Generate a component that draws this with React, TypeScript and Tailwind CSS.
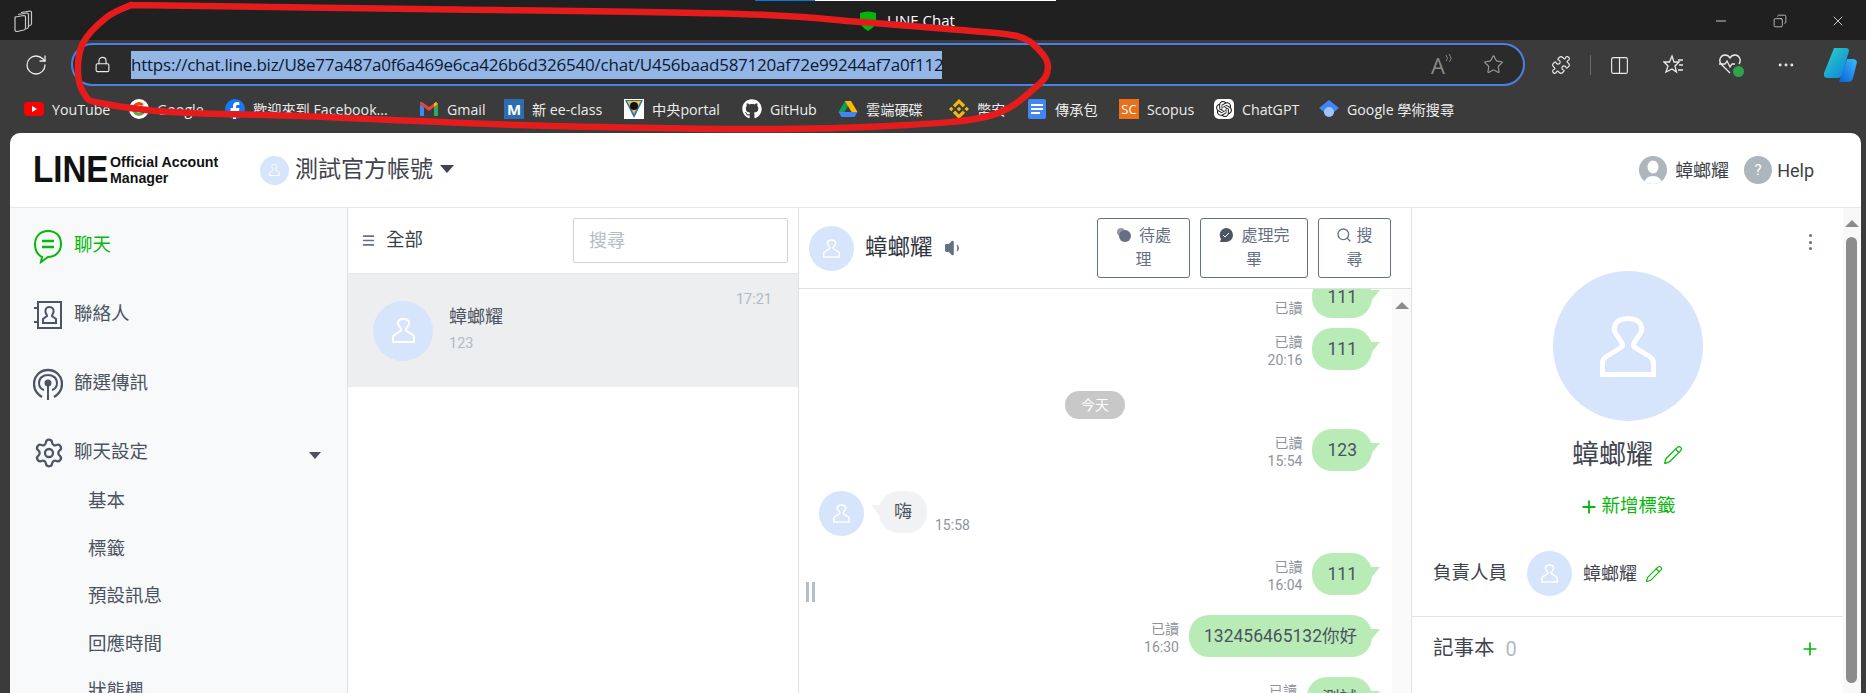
import React from 'react';
import { RotateCw, Lock, Star, Puzzle, Columns2, MoreHorizontal, Minus, X, Copy, Search, Volume1, Pencil, Plus, Settings, Menu } from 'lucide-react';
import { FaGithub } from 'react-icons/fa';
import { SiOpenai, SiBinance } from 'react-icons/si';
import { FcGoogle } from 'react-icons/fc';

const chromeFont = "font-['Open_Sans','Noto_Sans_CJK_TC',sans-serif]";
const appFont = "font-['Roboto','Noto_Sans_CJK_TC',sans-serif]";

const PersonGlyph = ({ className }: { className: string }) => (
  <svg viewBox="0 0 56 61" className={className} fill="none" stroke="white" strokeWidth="5">
    <path d="M2.500 58.500V47q0-4 4-6.500L21 31.500q2.500-1.500 1-4.500L15.500 17q-2-3-1-6C15.500 5.500 21 2.500 28 2.500S40.500 5.500 41.500 11q1 3-1 6L34 27q-1.500 3 1 4.500l14.500 9q4 2.500 4 6.500v11.500z" />
  </svg>
);

const Avatar = ({ box, glyph }: { box: string; glyph: string }) => (
  <div className={`${box} shrink-0 rounded-full bg-[#d6e4fc] flex items-center justify-center`}>
    <PersonGlyph className={glyph} />
  </div>
);

const bookmarks: { label: string; icon: React.ReactNode; w: string }[] = [
  { label: 'YouTube', w: 'w-[105px]', icon: <svg viewBox="0 0 20 20" className="w-5 h-5"><rect y="3" width="20" height="14" rx="4" fill="#f00" /><path d="M8 7l5 3-5 3z" fill="#fff" /></svg> },
  { label: 'Google', w: 'w-[96px]', icon: <span className="w-5 h-5 rounded-full bg-white flex items-center justify-center"><FcGoogle className="w-4 h-4" /></span> },
  { label: '歡迎來到 Facebook...', w: 'w-[194px]', icon: <svg viewBox="0 0 20 20" className="w-5 h-5"><circle cx="10" cy="10" r="10" fill="#1877f2" /><path d="M11 20v-8h3l.4-3H11V7.500c0-1 .4-1.500 1.600-1.500h1.700V3.300C13.800 3.200 13 3 12 3c-2.400 0-4 1.500-4 4v2H5.500v3H8v8z" fill="#fff" /></svg> },
  { label: 'Gmail', w: 'w-[85px]', icon: <svg viewBox="0 0 20 20" className="w-5 h-5"><path d="M1 5v12h4V8z" fill="#4285f4" /><path d="M19 5v12h-4V8z" fill="#34a853" /><path d="M1 5l9 7 9-7-2-2-7 5-7-5-2 0z" fill="#ea4335" /><path d="M15 8l4-3-2-2-2 1.500z" fill="#fbbc04" /></svg> },
  { label: '新 ee-class', w: 'w-[120px]', icon: <span className="w-5 h-5 bg-[#2c6cb0] text-white text-[15px] font-bold leading-5 text-center">M</span> },
  { label: '中央portal', w: 'w-[118px]', icon: <svg viewBox="0 0 20 20" className="w-5 h-5"><rect width="20" height="20" fill="#fff" /><path d="M1 1h18L10 19z" fill="#2f6fb3" /><path d="M3 2h14l-7 13z" fill="#f2c230" /><circle cx="10" cy="7" r="4" fill="#111" /></svg> },
  { label: 'GitHub', w: 'w-[96px]', icon: <FaGithub className="w-5 h-5 text-white" /> },
  { label: '雲端硬碟', w: 'w-[111px]', icon: <svg viewBox="0 0 20 18" className="w-5 h-[18px]"><path d="M7 1h6L6.500 12H.500z" fill="#0f9d58" /><path d="M13 1l6.500 11h-6L7 1z" fill="#fbbc04" /><path d="M6.500 12h13L16.500 17h-13L.500 12z" fill="#4285f4" /></svg> },
  { label: '幣安', w: 'w-[78px]', icon: <SiBinance className="w-5 h-5 text-[#f0b90b]" /> },
  { label: '傳承包', w: 'w-[92px]', icon: <svg viewBox="0 0 20 20" className="w-5 h-5"><rect x="1" width="18" height="20" rx="2" fill="#4285f4" /><path d="M4 5h12v2H4zM4 9h12v2H4zM4 13h9v2H4z" fill="#fff" /></svg> },
  { label: 'Scopus', w: 'w-[95px]', icon: <span className="w-5 h-5 bg-[#e9711c] text-white text-[13px] leading-5 text-center">SC</span> },
  { label: 'ChatGPT', w: 'w-[105px]', icon: <span className="w-5 h-5 rounded-[5px] bg-white flex items-center justify-center"><SiOpenai className="w-4 h-4 text-[#222]" /></span> },
  { label: 'Google 學術搜尋', w: 'w-[140px]', icon: <svg viewBox="0 0 20 20" className="w-5 h-5"><path d="M10 1l10 8-10 8L0 9z" fill="#4285f4" /><circle cx="10" cy="13" r="5" fill="#a0c3ff" /></svg> },
];

const redPoints: [number, number][] = [
  [131, 5], [417, 9], [740, 14], [860, 22], [960, 30], [1017, 36], [1039, 50], [1048, 67], [1037, 86], [989, 116],
  [887, 126], [753, 129], [520, 125], [300, 116], [170, 112], [100, 103], [85, 95], [78, 73], [83, 43], [107, 17], [131, 5],
];

// catmull-rom through the points of the hand drawn circle
const smooth = (pts: [number, number][]) => {
  let d = `M${pts[0][0]} ${pts[0][1]}`;
  for (let i = 0; i < pts.length - 1; i++) {
    const p0 = pts[Math.max(i - 1, 0)];
    const p1 = pts[i];
    const p2 = pts[i + 1];
    const p3 = pts[Math.min(i + 2, pts.length - 1)];
    d += `C${p1[0] + (p2[0] - p0[0]) / 6} ${p1[1] + (p2[1] - p0[1]) / 6} ${p2[0] - (p3[0] - p1[0]) / 6} ${p2[1] - (p3[1] - p1[1]) / 6} ${p2[0]} ${p2[1]}`;
  }
  return d;
};

const TitleBar = () => (
  <div className="h-10 shrink-0 bg-[#202020] flex flex-col">
    <div className="h-px ml-[755px] w-[301px] flex">
      <div className="w-[60px] bg-[#0a78d4]" />
      <div className="flex-1 bg-white" />
    </div>
    <div className="flex-1 flex items-center text-[#f0f0f0]">
      <svg viewBox="0 0 20 22" className="ml-[13px] w-[20px] h-[22px]" fill="none" stroke="#c8c8c8" strokeWidth="1.200" strokeLinejoin="round">
        <path d="M8 2.500l9-1.500q1.500 0 1.500 1.500v11q0 1.500-1.500 2l-1 .3" />
        <path d="M5 4.500l9-1.500q1.500 0 1.500 1.500v12q0 1.500-1.500 2l-1 .3" />
        <path d="M2 7l9-1.500q1.500 0 1.500 1.500v11q0 1.500-1.500 2l-7 1.500Q2 21.500 2 20z" />
      </svg>
      <svg viewBox="0 0 18 20" className="ml-[826px] w-[18px] h-5">
        <path d="M1 2q8-3 16 0v9q-1 5-8 9-7-4-8-9z" fill="#06b30a" />
      </svg>
      <span className="ml-[10px] text-[15px] text-white">LINE Chat</span>
      <div className="ml-auto flex items-center">
        <Minus className="w-4 h-4" strokeWidth={1.200} />
        <Copy className="ml-[44px] w-[14px] h-[14px] -scale-x-100" strokeWidth={1.200} />
        <X className="ml-[43px] mr-[20px] w-4 h-4" strokeWidth={1.200} />
      </div>
    </div>
  </div>
);

const AddressRow = () => (
  <div className="h-[50px] shrink-0 flex items-center text-[#ececec]">
    <RotateCw className="ml-[24px] w-[24px] h-[24px]" strokeWidth={1.300} />
    <div className="ml-[23px] w-[1454px] h-[43px] rounded-full border-[2.500px] border-[#4a80e6] bg-[#2b2b2b] flex items-center -mt-[1px]">
      <Lock className="ml-[21px] w-[17px] h-[19px]" strokeWidth={1.600} />
      <span className="ml-[20px] h-[28px] w-[811px] bg-[#93b6e6] text-[#0b1a2e] text-[17px] leading-[28px] whitespace-nowrap tracking-[-0.23px]">
        https://chat.line.biz/U8e77a487a0f6a469e6ca426b6d326540/chat/U456baad587120af72e99244af7a0f112
      </span>
      <span className="ml-auto text-[#8a8a8a] text-[22px] leading-none">A</span>
      <svg viewBox="0 0 8 12" className="w-2 h-3 -mt-3 text-[#8a8a8a]" fill="none" stroke="currentColor"><path d="M1 2q3 4 0 6M4 1q4 5 0 8" /></svg>
      <Star className="ml-[30px] mr-[19px] w-[21px] h-[21px] text-[#9a9a9a]" strokeWidth={1.300} />
    </div>
    <Puzzle className="ml-[26px] w-[20px] h-[20px]" strokeWidth={1.400} />
    <div className="ml-[19px] w-px h-[20px] bg-[#6a6a6a]" />
    <Columns2 className="ml-[18px] w-[21px] h-[21px]" strokeWidth={1.300} />
    <svg viewBox="0 0 22 22" className="ml-[33px] w-[22px] h-[22px]" fill="none" stroke="currentColor" strokeWidth="1.300">
      <path d="M9 2l2 6h5l-4 4 1.500 6L9 15l-6 3 2-6-4-4h5.500zM15 6h5M16 11h4M15 16h5" />
    </svg>
    <div className="ml-[33px] relative w-[26px] h-[24px]">
      <svg viewBox="0 0 24 22" className="w-[24px] h-[22px]" fill="none" stroke="currentColor" strokeWidth="1.300">
        <path d="M12 20L3 11C0 7 3 2 7 2c2 0 4 1 5 3 1-2 3-3 5-3 4 0 7 5 4 9M1 11h6l2-3 3 6 2-3h3" />
      </svg>
      <span className="absolute right-0 bottom-0 w-[11px] h-[11px] rounded-full bg-[#2ea44f]" />
    </div>
    <MoreHorizontal className="ml-[32px] w-[20px] h-[20px]" strokeWidth={1.500} />
    <svg viewBox="0 0 34 36" className="ml-[27px] w-[34px] h-[36px]">
      <defs>
        <linearGradient id="cpA" x1="0" y1="0" x2="1" y2="1"><stop offset="0" stopColor="#2dd4bf" /><stop offset="1" stopColor="#0b7fe0" /></linearGradient>
        <linearGradient id="cpB" x1="0" y1="1" x2="1" y2="0"><stop offset="0" stopColor="#0a5fd8" /><stop offset="1" stopColor="#38bdf8" /></linearGradient>
      </defs>
      <path d="M11 1h12q3 0 3 3L19 28q-1 3-4 3H5q-5 0-4-5z" fill="url(#cpA)" />
      <path d="M16 35h9q4 0 5-4l4-16q-1-3-4-3h-6z" fill="url(#cpB)" />
    </svg>
  </div>
);

const BookmarkRow = () => (
  <div className={`h-[43px] shrink-0 flex items-center pl-[24px] pb-[4px] text-[14.200px] text-[#ececec] ${chromeFont}`}>
    {bookmarks.map((b) => (
      <div key={b.label} className={`${b.w} shrink-0 flex items-center gap-2 whitespace-nowrap`}>
        {b.icon}
        <span>{b.label}</span>
      </div>
    ))}
  </div>
);

const ChatIcon = () => (
  <svg viewBox="0 0 30 36" className="w-[30px] h-9" fill="none" stroke="#06b80a" strokeWidth="2">
    <path d="M15 3C7 3 2 9 2 16c0 7 3 11 7 13l-1 5 7-5c7 0 13-5 13-13S23 3 15 3z" />
    <path d="M9 13h12M9 19h12" strokeWidth="2.500" />
  </svg>
);

const ContactIcon = () => (
  <svg viewBox="0 0 30 30" className="w-[30px] h-[30px]" fill="none" stroke="#4b5563" strokeWidth="2">
    <path d="M5 2h23v26H5zM1 8h5M1 22h5" />
    <path d="M16.500 7c-3 0-4.500 2-4 5 .2 1.500 1.500 3 1.500 4l-4 3v4h13v-4l-4-3c0-1 1.300-2.500 1.500-4 .5-3-1-5-4-5z" />
  </svg>
);

const BroadcastIcon = () => (
  <svg viewBox="0 0 30 32" className="w-[30px] h-8" fill="none" stroke="#4b5563" strokeWidth="2">
    <path d="M9 29C4 26 1 21 1 16 1 8 7 2 15 2s14 6 14 14c0 5-3 10-8 13" strokeWidth="2.400" />
    <path d="M11 22c-3-1-5-4-5-7 0-5 4-8 9-8s9 3 9 8c0 3-2 6-5 7" />
    <circle cx="15" cy="15" r="2.500" fill="#4b5563" />
    <path d="M15 15v17" />
  </svg>
);

const mainNav = [
  { label: '聊天', icon: <ChatIcon />, active: true },
  { label: '聯絡人', icon: <ContactIcon /> },
  { label: '篩選傳訊', icon: <BroadcastIcon /> },
];

const Sidebar = () => (
  <aside className="w-[338px] shrink-0 bg-[#f8f9fb] border-r border-[#dfe1e5] overflow-hidden pt-[3px] text-[18.500px] text-[#4b5360]">
    {mainNav.map((n) => (
      <div key={n.label} className={`h-[69px] flex items-center pl-[23px] ${n.active ? 'text-[#06b80a]' : ''}`}>
        <div className="w-[41px]">{n.icon}</div>
        <span>{n.label}</span>
      </div>
    ))}
    <div className="h-[69px] flex items-center pl-[23px]">
      <Settings className="w-[32px] h-[32px] mr-[9px] text-[#4b5563]" strokeWidth={1.700} />
      <span>聊天設定</span>
      <span className="ml-auto mr-[26px] mt-[5px] border-x-[6px] border-x-transparent border-t-[7px] border-t-[#4b5360]" />
    </div>
    <div className="-mt-[9px] pl-[78px]">
      {['基本', '標籤', '預設訊息', '回應時間', '狀態欄'].map((s) => (
        <div key={s} className="h-[47.500px] leading-[47.500px]">{s}</div>
      ))}
    </div>
  </aside>
);

const ChatList = () => (
  <section className="w-[451px] shrink-0 border-r border-[#dfe1e5] flex flex-col">
    <div className="h-[66px] shrink-0 border-b border-[#e4e6e9] flex items-center pl-[13px] pr-[10px]">
      <Menu className="w-[15px] h-[15px] text-[#667085]" strokeWidth={2.500} />
      <span className="ml-[10px] text-[18.500px] text-[#3a3f47]">全部</span>
      <div className="ml-auto w-[215px] h-[45px] rounded-[2px] border border-[#cfd2d7] flex items-center pl-[15px] text-[18px] text-[#b7bcc4]">搜尋</div>
    </div>
    <div className="h-[113px] shrink-0 bg-[#edeef0] flex pl-[25px] pr-[26px] items-center">
      <Avatar box="w-[60px] h-[60px]" glyph="w-[23px] h-[25px]" />
      <div className="ml-[16px] -mt-[3px]">
        <div className="text-[18px] text-[#4b5360] leading-[26px]">蟑螂耀</div>
        <div className="mt-[3px] text-[14.500px] text-[#b4bac3]">123</div>
      </div>
      <div className="ml-auto self-start mt-[15px] text-[14.500px] text-[#b4bac3]">17:21</div>
    </div>
  </section>
);

const headerButtons = [
  { label: '待處理', w: 'w-[93px] px-[15px]', icon: <svg viewBox="0 0 16 16" className="inline w-4 h-4 mr-[7px] -mt-[3px]"><circle cx="9" cy="9" r="6" fill="#667085" /><circle cx="5" cy="5" r="4" fill="#667085" opacity=".7" /></svg> },
  { label: '處理完畢', w: 'w-[108px] px-[12px]', icon: <svg viewBox="0 0 16 16" className="inline w-4 h-4 mr-[7px] -mt-[3px]"><path d="M8 1a7 7 0 110 14H2l1-3A7 7 0 018 1z" fill="#4b5563" /><path d="M5 8l2 2 4-4" stroke="#fff" fill="none" /></svg> },
  { label: '搜尋', w: 'w-[73px] px-[15px]', icon: <Search className="inline w-4 h-4 mr-[4px] -mt-[3px]" strokeWidth={2} /> },
];

const Tail = ({ side, color }: { side: 'left' | 'right'; color: string }) => (
  <svg viewBox="0 0 9 11" className={`absolute top-[14px] w-[9px] h-[11px] ${side === 'right' ? '-right-[8px]' : '-left-[8px] -scale-x-100'}`} fill={color}>
    <path d="M0 0h9L0 11z" />
  </svg>
);

const Sent = ({ text, time, mt }: { text: string; time?: string; mt: string }) => (
  <div className={`${mt} flex justify-end items-end pr-[20px]`}>
    <div className="mr-[10px] pb-[1px] text-right text-[14px] leading-[18px] text-[#8f949c]">
      <div>已讀</div>
      {time && <div>{time}</div>}
    </div>
    <div className="relative h-[42px] rounded-[20px] bg-[#b9ebb7] px-[15px] text-[17.500px] leading-[42px] text-[#4b5360]">
      {text}
      <Tail side="right" color="#b9ebb7" />
    </div>
  </div>
);

const ChatPane = () => (
  <section className="w-[613px] shrink-0 border-r border-[#dfe1e5] flex flex-col min-h-0">
    <div className="h-[81px] shrink-0 border-b border-[#dfe1e5] flex items-center pl-[10px] pr-[20px]">
      <Avatar box="w-[45px] h-[45px]" glyph="w-[17px] h-[19px]" />
      <span className="ml-[11px] text-[22.500px] text-[#30353d]">蟑螂耀</span>
      <Volume1 className="ml-[11px] w-[20px] h-[20px] text-[#667085]" fill="#667085" strokeWidth={1.500} />
      <div className="ml-auto flex gap-[10px]">
        {headerButtons.map((b) => (
          <div key={b.label} className={`${b.w} h-[60px] rounded-[3px] border border-[#667085] text-center text-[16px] leading-[24px] text-[#667085] py-[5px]`}>
            {b.icon}{b.label}
          </div>
        ))}
      </div>
    </div>
    <div className="flex-1 flex min-h-0 relative">
      <div className="flex-1 overflow-hidden">
        <Sent text="111" mt="-mt-[13px]" />
        <Sent text="111" time="20:16" mt="mt-[10px]" />
        <div className="mt-[21px] ml-[266px] w-[60px] h-[28px] rounded-full bg-[#c8c8c8] text-center text-[14px] leading-[28px] text-white">今天</div>
        <Sent text="123" time="15:54" mt="mt-[10px]" />
        <div className="mt-[20px] flex pl-[20px]">
          <Avatar box="w-[45px] h-[45px]" glyph="w-[17px] h-[19px]" />
          <div className="relative ml-[15px] h-[42px] rounded-[20px] bg-[#f1f2f4] px-[15px] text-[18px] leading-[42px] text-[#4b5360]">
            嗨
            <Tail side="left" color="#f1f2f4" />
          </div>
          <span className="ml-[8px] mt-[25px] text-[14px] leading-[18px] text-[#8f949c]">15:58</span>
        </div>
        <Sent text="111" time="16:04" mt="mt-[17px]" />
        <Sent text="132456465132你好" time="16:30" mt="mt-[20px]" />
        <Sent text="測試" time="16:31" mt="mt-[20px]" />
      </div>
      <div className="w-[19px] shrink-0 bg-[#fafafa] flex justify-center pt-[13px]">
        <span className="h-0 border-x-[7px] border-x-transparent border-b-[7px] border-b-[#8c8c8c]" />
      </div>
      <div className="absolute left-[7px] top-[293px] flex gap-[3px]">
        <span className="w-[3px] h-[20px] bg-[#b5bdc8]" />
        <span className="w-[3px] h-[20px] bg-[#b5bdc8]" />
      </div>
    </div>
  </section>
);

const ProfilePane = () => (
  <section className="flex-1 min-w-0 flex">
    <div className="flex-1 min-w-0">
      <div className="pt-[25px] pr-[31px] flex justify-end">
        <div className="flex flex-col gap-[3.500px] py-[1px]">
          <span className="w-[3px] h-[3px] rounded-full bg-[#667085]" />
          <span className="w-[3px] h-[3px] rounded-full bg-[#667085]" />
          <span className="w-[3px] h-[3px] rounded-full bg-[#667085]" />
        </div>
      </div>
      <div className="mt-[20px] flex justify-center">
        <Avatar box="w-[150px] h-[150px]" glyph="w-[56px] h-[61px]" />
      </div>
      <div className="mt-[16px] h-[36px] flex items-center justify-center gap-[10px] text-[27px] text-[#3f454e]">
        蟑螂耀
        <Pencil className="w-[20px] h-[20px] text-[#06b80a]" strokeWidth={1.500} />
      </div>
      <div className="mt-[20px] h-[28px] flex items-center justify-center gap-[2px] text-[18.500px] text-[#06b80a]">
        <Plus className="w-[20px] h-[20px]" strokeWidth={2.200} />
        新增標籤
      </div>
      <div className="mt-[30px] flex items-center pl-[21px] text-[#3f454e]">
        <span className="text-[18.500px]">負責人員</span>
        <div className="ml-[20px]"><Avatar box="w-[45px] h-[45px]" glyph="w-[17px] h-[19px]" /></div>
        <span className="ml-[11px] text-[18px]">蟑螂耀</span>
        <Pencil className="ml-[8px] w-[18px] h-[18px] text-[#06b80a]" strokeWidth={1.500} />
      </div>
      <div className="mt-[20px] border-t border-[#e2e3e5] h-[64px] flex items-center pl-[21px] pr-[23px]">
        <span className="text-[20.500px] text-[#3f454e]">記事本</span>
        <span className="ml-[11px] text-[20px] text-[#b4bac3]">0</span>
        <Plus className="ml-auto w-[20px] h-[20px] text-[#06b80a]" strokeWidth={2} />
      </div>
    </div>
    <div className="w-[18px] shrink-0 bg-[#f8f8f8] flex flex-col items-center pt-[12px] pb-[10px] pr-[1px]">
      <span className="h-0 border-x-[7px] border-x-transparent border-b-[7px] border-b-[#8c8c8c]" />
      <div className="mt-[10px] w-[11px] flex-1 rounded-full bg-[#8c8c8c]" />
    </div>
  </section>
);

export default function App() {
  return (
    <div className={`relative w-[1866px] h-[693px] overflow-hidden bg-[#3b3b3b] flex flex-col ${chromeFont}`}>
      <TitleBar />
      <AddressRow />
      <BookmarkRow />
      <div className={`flex-1 min-h-0 ml-[10px] mr-[5px] rounded-t-[10px] bg-white flex flex-col overflow-hidden ${appFont}`}>
        <header className="h-[75px] shrink-0 border-b border-[#e6e8eb] flex items-center pl-[23px] pr-[47px]">
          <div className="w-[77px] shrink-0">
            <div className="origin-left scale-x-[0.92] font-['Liberation_Sans'] text-[36px] font-bold leading-none text-[#111]">LINE</div>
          </div>
          <div className="w-[118px] shrink-0 -mt-[1px] font-['Liberation_Sans'] text-[14.200px] font-bold leading-[16px] text-[#111]">
            <div>Official Account</div>
            <div>Manager</div>
          </div>
          <div className="ml-[32px]"><Avatar box="w-[29px] h-[29px]" glyph="w-[11px] h-[12px]" /></div>
          <span className="ml-[6px] text-[23px] text-[#3f454e]">測試官方帳號</span>
          <span className="ml-[7px] -mt-[2px] border-x-[7px] border-x-transparent border-t-[8px] border-t-[#3f454e]" />
          <div className="ml-auto flex items-center text-[18px] text-[#3a3f47]">
            <div className="w-[28px] h-[28px] rounded-full bg-[#adb5bd] flex items-end justify-center overflow-hidden">
              <svg viewBox="0 0 28 28" className="w-[28px] h-[28px]" fill="#fff"><ellipse cx="14" cy="11" rx="5.500" ry="6.500" /><path d="M5 28q1-8 9-8t9 8z" /></svg>
            </div>
            <span className="ml-[8px]">蟑螂耀</span>
            <div className="ml-[15px] w-[28px] h-[28px] rounded-full bg-[#adb5bd] text-center text-[15px] leading-[28px] text-white">?</div>
            <span className="ml-[5px]">Help</span>
          </div>
        </header>
        <div className="flex-1 min-h-0 flex overflow-hidden">
          <Sidebar />
          <ChatList />
          <ChatPane />
          <ProfilePane />
        </div>
      </div>
      <svg viewBox="0 0 1866 693" className="absolute inset-0 w-[1866px] h-[693px] pointer-events-none" fill="none">
        <path d={smooth(redPoints)} stroke="#e61c1c" strokeWidth="6.500" strokeLinecap="round" strokeLinejoin="round" />
      </svg>
    </div>
  );
}
